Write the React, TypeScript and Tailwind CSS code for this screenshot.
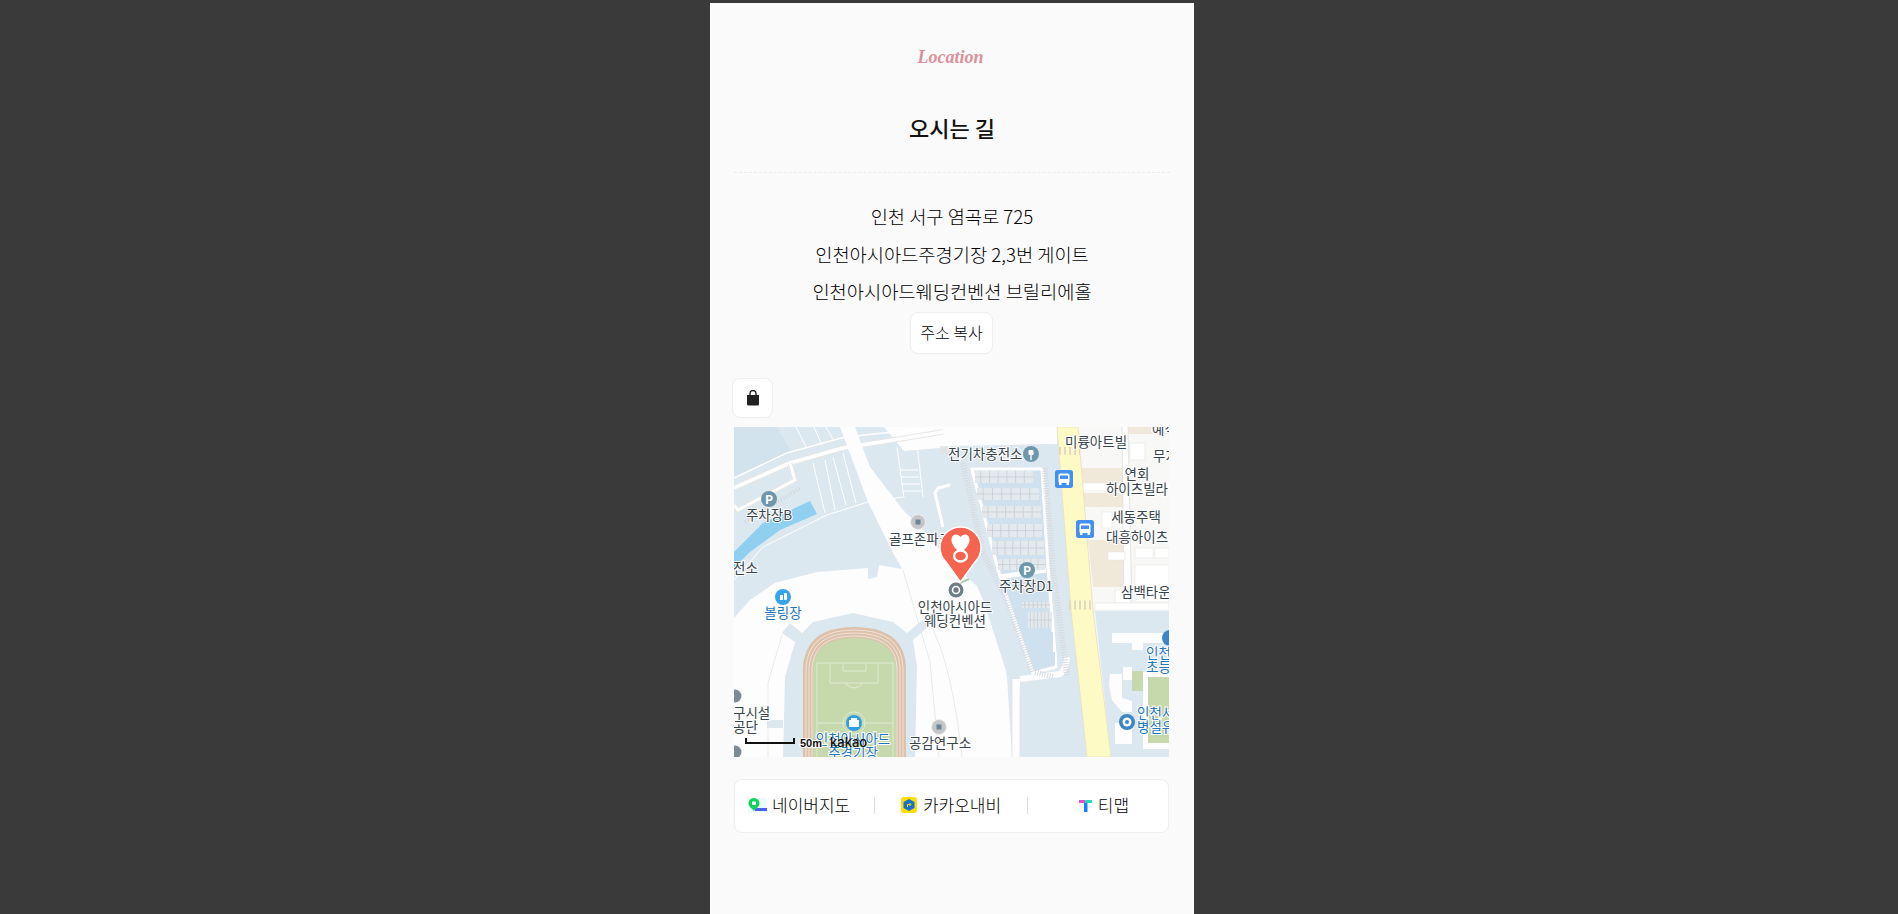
import React from 'react';

const kr = "font-['Noto_Sans_CJK_KR','Noto_Sans',sans-serif]";

type Label = { x: number; y: number; t: string; anchor?: 'start' | 'middle'; blue?: boolean };

const labels: Label[] = [
  { x: 35, y: 93, t: '주차장B', anchor: 'middle' },
  { x: -1, y: 146, t: '전소' },
  { x: 155, y: 117, t: '골프존파크' },
  { x: 214, y: 32, t: '전기차충전소' },
  { x: 331, y: 20, t: '미륭아트빌' },
  { x: 418, y: 7, t: '예식장' },
  { x: 419, y: 34, t: '무지개' },
  { x: 403, y: 52, t: '연회', anchor: 'middle' },
  { x: 403, y: 67, t: '하이츠빌라', anchor: 'middle' },
  { x: 402, y: 95, t: '세동주택', anchor: 'middle' },
  { x: 372, y: 115, t: '대흥하이츠빌' },
  { x: 387, y: 170, t: '삼백타운' },
  { x: 292, y: 164, t: '주차장D1', anchor: 'middle' },
  { x: 221, y: 185, t: '인천아시아드', anchor: 'middle' },
  { x: 221, y: 199, t: '웨딩컨벤션', anchor: 'middle' },
  { x: 49, y: 191, t: '볼링장', anchor: 'middle', blue: true },
  { x: -1, y: 291, t: '구시설' },
  { x: -1, y: 305, t: '공단' },
  { x: 175, y: 321, t: '공감연구소' },
  { x: 119, y: 317, t: '인천아시아드', anchor: 'middle', blue: true },
  { x: 119, y: 331, t: '주경기장', anchor: 'middle', blue: true },
  { x: 412, y: 231, t: '인천시', blue: true },
  { x: 412, y: 245, t: '초등학교', blue: true },
  { x: 403, y: 291, t: '인천서', blue: true },
  { x: 403, y: 305, t: '병설유치원', blue: true },
];

// parking rows: [x, y, width, height, hasBays]
const rows = [
  [241, 44, 58, 12, 1], [243, 61, 62, 12, 1], [248, 79, 59, 12, 1], [253, 97, 55, 13, 1], [258, 114, 52, 14, 1], [264, 132, 47, 11, 1],
  [288, 175, 28, 6, 1], [294, 185, 24, 16, 1], [296, 205, 23, 15, 0], [303, 225, 18, 13, 0],
];

const Bus = ({ x, y }: { x: number; y: number }) => (
  <g transform={`translate(${x} ${y})`}>
    <rect x="-9" y="-9" width="18" height="18" rx="2.5" fill="#4590ee" />
    <rect x="-5.5" y="-5.5" width="11" height="9.5" rx="1.5" fill="#fff" />
    <rect x="-4" y="-3.5" width="8" height="3.5" fill="#4590ee" />
    <rect x="-5" y="4" width="2.5" height="2" fill="#fff" />
    <rect x="2.5" y="4" width="2.5" height="2" fill="#fff" />
  </g>
);

const MapDrawing = () => (
  <svg viewBox="0 0 435 330" className="block w-full h-full">
    <rect width="435" height="330" fill="#dce8f0" />
    {/* north west corner */}
    <path d="M0 0H43L58 26L0 50Z" fill="#d2e3ee" />
    {/* top band and upper roads */}
    <path d="M150 0H323V17L216 20L170 24Z" fill="#fdfdfe" />
    <path d="M206 20H214M206 23H214M206 26H214" stroke="#e3dfda" strokeWidth="1.4" />
    <path d="M0 61L56 36L109 21L209 5" stroke="#e8e6e3" strokeWidth="5.5" fill="none" />
    <path d="M0 61L56 36L109 21L209 5" stroke="#fff" strokeWidth="3.5" fill="none" />
    <path d="M0 51L53 26L111 10L209 0" stroke="#fff" strokeWidth="1.5" fill="none" />
    <path d="M56 36L61 53L4 83L0 78" stroke="#e8e6e3" strokeWidth="4.5" fill="none" />
    <path d="M56 36L61 53L4 83L0 78" stroke="#fff" strokeWidth="2.8" fill="none" />
    <path d="M62 0L72 20M80 0L88 18M92 0L100 14" stroke="#fff" strokeWidth="1" fill="none" />
    <path d="M79 36L91 86M91 33L101 83M99 30L112 78M109 26L122 76" stroke="#fff" strokeWidth="1" fill="none" />
    <path d="M163 20L170 71M183 18L189 70M166 43H184M167 50H185M168 57H186M168 64H187" stroke="#fff" strokeWidth="1" fill="none" />
    <path d="M0 153L29 120L93 88L134 75L169 70" stroke="#fff" strokeWidth="1" fill="none" />
    {/* canal */}
    <path d="M0 125L29 96L76 74L83 87L46 103L16 125L0 141Z" fill="#8fcff0" />
    <path d="M11 95L66 61" stroke="#d0d6db" strokeWidth="4" strokeDasharray="1 2" fill="none" />
    {/* plaza around the stadium */}
    <path d="M0 191L16 173L41 156L83 145L134 141L134 152L143 150L145 138L168 142L206 153L240 170L259 173L273 250L278 330H0Z" fill="#fdfdfe" />
    {/* diagonal road */}
    <path d="M106 0H121L136 40L169 83L196 110L216 136L262 175L245 190L205 170L169 143L159 126L134 75Z" fill="#fdfdfe" />
    <path d="M169 143L196 235L205 330" stroke="#e1e4e7" strokeWidth="0.8" fill="none" />
    <path d="M48 208L34 256V330" stroke="#e1e4e7" strokeWidth="0.8" fill="none" />
    <path d="M199 203Q218 240 228 330" stroke="#e1e4e7" strokeWidth="0.8" fill="none" />
    {/* stadium */}
    <path d="M49 330L51 250L61 215L48 206L56 196L68 206L79 195L119 186L159 195L173 206L191 191L196 198L179 213L183 240L181 330Z" fill="#dce8f0" />
    <path d="M33 293H49V301H33Z" fill="#dce8f0" />
    <path d="M69 330V240Q72 200 120 200Q170 200 172 240V330Z" fill="#dcc1ab" />
    <path d="M72 330V240Q75 203 120 203Q167 203 169 240V330" stroke="#f6ece3" strokeWidth="0.8" fill="none" />
    <path d="M75 330V240Q78 206 120 206Q164 206 166 240V330" stroke="#f6ece3" strokeWidth="0.8" fill="none" />
    <path d="M78 330V240Q81 209 120 209Q161 209 163 240V330" stroke="#f6ece3" strokeWidth="0.8" fill="none" />
    <path d="M79 330V240Q82 211 120 211Q160 211 162 240V330Z" fill="#c6d9ad" />
    <g stroke="#e3edd4" strokeWidth="0.9" fill="none">
      <path d="M83 330V236H159V330" />
      <path d="M96 236V256H144V236" />
      <path d="M109 236V244H132V236" />
      <path d="M111 256Q120 266 129 256" />
      <path d="M83 296H159" />
      <circle cx="120" cy="296" r="11" />
    </g>
    {/* parking lot */}
    <path d="M216 19L316 17L340 200L352 330H286L278 263L250 175L216 100Z" fill="#dce8f0" />
    <path d="M238 42H308L322 240L299 246L264 150Z" fill="#cfe1ee" />
    <path d="M238 42H308L314 140L322 240L299 246L266 150Z" stroke="#fff" strokeWidth="3.2" fill="none" strokeLinejoin="round" />
    <path d="M216 58L204 61L201 66L209 100" stroke="#fff" strokeWidth="3" fill="none" />
    <path d="M286 252L326 247Q332 243 333 230" stroke="#fdfdfe" strokeWidth="6" fill="none" />
    <path d="M266 150L312 143" stroke="#fff" strokeWidth="5" fill="none" />
    {rows.map(([x, y, w, h, bays], i) => (
      <g key={i}>
        <rect x={x} y={y} width={w} height={h} fill={bays ? '#e4e9ed' : '#cfe1ee'} />
        {bays === 1 && (
          <path
            d={`M${x} ${y + h / 2}h${w}M${x + w * 0.1} ${y}v${h}M${x + w * 0.25} ${y}v${h}M${x + w * 0.4} ${y}v${h}M${x + w * 0.55} ${y}v${h}M${x + w * 0.7} ${y}v${h}M${x + w * 0.85} ${y}v${h}`}
            stroke="#c2cbd2"
            strokeWidth="0.7"
            fill="none"
          />
        )}
      </g>
    ))}
    <path d="M229 36L249 126L273 173L299 246" stroke="#d6dadf" strokeWidth="6" strokeDasharray="1 1.5" fill="none" />
    <path d="M311 41L319 146L323 173L333 248" stroke="#d6dadf" strokeWidth="6" strokeDasharray="1 1.5" fill="none" />
    <path d="M301 245L319 250" stroke="#d6dadf" strokeWidth="6" strokeDasharray="1 1.5" fill="none" />
    <path d="M282 252V330" stroke="#fdfdfe" strokeWidth="8" fill="none" />
    <path d="M278 250V330M286 262V330" stroke="#dfe3e6" strokeWidth="0.8" fill="none" />
    {/* east block */}
    <path d="M344 0H435V330H377L359 183Z" fill="#f8f8f7" />
    <path d="M394 0H435V7H394Z" fill="#f0e9da" />
    <path d="M346 41H389V56H347Z" fill="#f0e9da" />
    <path d="M349 66H389V80H350Z" fill="#f0e9da" />
    <path d="M354 113H396L398 160H359Z" fill="#f0e9da" />
    <path d="M388 0H394L398 183H390Z" fill="#fdfdfe" />
    <path d="M388 0L390 183M394 0L398 183" stroke="#dedede" strokeWidth="0.8" fill="none" />
    <path d="M347 57H435V63H347Z" fill="#fff" />
    <g fill="#fff" stroke="#e4e4e2" strokeWidth="0.6">
      <rect x="368" y="85" width="10" height="16" />
      <rect x="396" y="16" width="15" height="17" />
      <rect x="417" y="0" width="18" height="6" />
      <rect x="374" y="125" width="17" height="8" />
      <rect x="401" y="121" width="18" height="10" />
      <rect x="421" y="121" width="14" height="10" />
      <rect x="401" y="138" width="34" height="37" />
      <rect x="381" y="163" width="15" height="13" />
      <rect x="361" y="176" width="74" height="7" />
    </g>
    {/* south east school */}
    <path d="M361 184H435V330H377Z" fill="#dce8f0" />
    <g fill="#fdfdfe">
      <path d="M378 206H436V216H378Z" />
      <path d="M398 216H409V223H398V253H389V240H398Z" />
      <path d="M376 247H388V271L398 274V285H388L378 273L375 258Z" />
      <path d="M381 296H398V317H381Z" />
      <path d="M409 245H436V322H409Z" />
    </g>
    <rect x="414" y="250" width="22" height="66" fill="#c6d9ad" />
    <rect x="398" y="244" width="11" height="20" fill="#c6d9ad" />
    {/* yellow road */}
    <path d="M323 0H344L359 183L377 330H353L337 183Z" fill="#fefac6" stroke="#e6dfc3" strokeWidth="0.8" />
    <path d="M325 24H346" stroke="#e0dac0" strokeWidth="8" strokeDasharray="2 3" fill="none" />
    <path d="M335 178H360" stroke="#e0dac0" strokeWidth="9" strokeDasharray="2 3" fill="none" />
    {/* place marks */}
    <g>
      <circle cx="35" cy="72" r="8" fill="#6f97ab" />
      <circle cx="293" cy="143" r="8" fill="#6f97ab" />
      <text x="35" y="76.5" textAnchor="middle" fill="#fff" fontSize="12" fontWeight="700" className={kr}>P</text>
      <text x="293" y="147.5" textAnchor="middle" fill="#fff" fontSize="12" fontWeight="700" className={kr}>P</text>
      <circle cx="297" cy="27" r="8" fill="#6f97ab" />
      <rect x="294.5" y="23" width="5" height="5" rx="1" fill="#fff" />
      <rect x="296.3" y="28" width="1.4" height="5" fill="#fff" />
      {[[184, 95], [205, 300]].map(([x, y]) => (
        <g key={x}>
          <circle cx={x} cy={y} r="7.5" fill="#c4c6c8" stroke="#eee" strokeWidth="1" />
          <rect x={x - 2.5} y={y - 2.5} width="5" height="5" fill="#6c8494" />
        </g>
      ))}
      <circle cx="1" cy="269" r="6.5" fill="#7d8c92" />
      <circle cx="1" cy="325" r="6.5" fill="#7d8c92" />
      <circle cx="49" cy="170" r="8" fill="#36a4ec" />
      <rect x="46" y="168" width="3" height="5" fill="#fff" />
      <rect x="50" y="166" width="3" height="7" rx="1" fill="#fff" />
      <circle cx="120" cy="296" r="8" fill="#2e9fe6" />
      <path d="M115 293h10v7h-10zM117 291h6v2h-6z" fill="#fff" />
      <circle cx="436" cy="211" r="8" fill="#3d86c6" />
      <circle cx="393" cy="295" r="8" fill="#3d86c6" />
      <circle cx="393" cy="295" r="4.5" fill="#fff" />
      <circle cx="393" cy="295" r="2" fill="#3d86c6" />
      <circle cx="222" cy="163" r="7.5" fill="#6d7f82" />
      <circle cx="222" cy="163" r="3.5" fill="none" stroke="#fff" strokeWidth="1.6" />
      <path d="M226 156L235 152" stroke="#a9cda6" strokeWidth="2" />
    </g>
    <Bus x={330} y={52} />
    <Bus x={351} y={102} />
    {/* map labels */}
    {labels.map((l) => (
      <text
        key={l.t + l.y}
        x={l.x}
        y={l.y}
        textAnchor={l.anchor ?? 'start'}
        fontSize="13.5"
        fill={l.blue ? '#1f78bd' : '#37444c'}
        stroke="#fff"
        strokeWidth="2"
        paintOrder="stroke"
        className={kr}
      >
        {l.t}
      </text>
    ))}
    {/* marker */}
    <path d="M226.5 155L212 135A20.5 20.5 0 1 1 241 135Z" fill="#f4644f" stroke="#fff" strokeWidth="1.4" strokeLinejoin="round" />
    <path d="M226.5 126C220 121 217 116 217.5 112C218 106.5 224 106 226.5 110C229 106 235 106.5 235.5 112C236 116 233 121 226.5 126Z" fill="#fff" />
    <ellipse cx="226.5" cy="129" rx="6.5" ry="5.5" fill="#f4644f" stroke="#fff" strokeWidth="2.4" />
    {/* scale and logo */}
    <path d="M12 311V316H60V311" stroke="#111" strokeWidth="2" fill="none" />
    <text x="66" y="320" fontSize="11" fontWeight="700" fill="#111" stroke="#fff" strokeWidth="2" paintOrder="stroke" className="font-['Liberation_Sans',sans-serif]">50m</text>
    <text x="96" y="320" fontSize="13" fontWeight="500" fill="#111" className="font-['Inter',sans-serif]">kakao</text>
  </svg>
);

const NaverIcon = () => (
  <svg viewBox="0 0 19 15" className="h-[15px] w-[19px]">
    <rect width="19" height="15" fill="#eefbfa" />
    <rect x="7" y="10" width="12" height="3" fill="#4a5ff0" />
    <path d="M6 0A5.5 5.5 0 0 1 11.5 5.5C11.5 8.5 8 10.5 6 13C4 10.5 0.5 8.5 0.5 5.5A5.5 5.5 0 0 1 6 0Z" fill="#0fd35b" />
    <rect x="4" y="3.5" width="4" height="3.5" rx="1" fill="#fff" />
  </svg>
);

const KakaoNaviIcon = () => (
  <svg viewBox="0 0 16 16" className="h-4 w-4">
    <rect width="16" height="16" rx="3" fill="#fadf00" />
    <path d="M8 2L13.5 5V11L8 14L2.5 11V5Z" fill="#1b6fd0" strokeLinejoin="round" />
    <path d="M6.5 10V7.5H9.5M8.5 6L10 7.5L8.5 9" stroke="#fadf00" strokeWidth="1" fill="none" />
  </svg>
);

const TmapIcon = () => (
  <svg viewBox="0 0 13 13" className="h-[13px] w-[13px]">
    <path d="M0 1H6V4H0Z" fill="#e84bd0" />
    <path d="M6 1H13V4H6Z" fill="#22dcc0" />
    <path d="M5 4H8.5V13H5Z" fill="#1481fb" />
  </svg>
);

export default function App() {
  return (
    <div className={`flex h-[914px] justify-center overflow-hidden bg-[#3a3a3a] pl-[6px] pt-[3px] ${kr}`}>
      <div className="h-full w-[484px] bg-[#fafafa] px-6 text-center">
        <p className="pr-[3px] pt-[42px] text-[18px] font-bold italic leading-[24px] text-[#d9919a] font-['Liberation_Serif',serif]">Location</p>
        <h2 className="mt-[42px] text-[22px] font-medium leading-[32px] text-[#111]">오시는 길</h2>
        <div className="mt-[29px] border-t border-dashed border-[#ececec]" />
        <div className="mt-[24px] text-[18.7px] font-light leading-[37.5px] text-black">
          <p>인천 서구 염곡로 725</p>
          <p>인천아시아드주경기장 2,3번 게이트</p>
          <p>인천아시아드웨딩컨벤션 브릴리에홀</p>
        </div>
        <div className="mt-[2px] flex justify-center pr-[1px]">
          <button className="h-[42px] w-[83px] rounded-lg border border-[#eeeeee] bg-white pb-[1px] text-[16px] font-light text-black">주소 복사</button>
        </div>
        <div className="mt-[24.5px] -ml-0.5 flex">
          <button className="flex h-[40px] w-[41px] items-center justify-center rounded-lg border border-[#eeeeee] bg-white">
            <svg viewBox="0 0 14 16" className="h-4 w-[14px]">
              <path d="M4 5V3.5A3 3 0 0 1 10 3.5V5" stroke="#222" strokeWidth="1.4" fill="none" />
              <path d="M1 5H13V14A1.5 1.5 0 0 1 11.5 15.5H2.5A1.5 1.5 0 0 1 1 14Z" fill="#222" />
            </svg>
          </button>
        </div>
        <div className="mt-[9px] h-[330px] w-[435px] overflow-hidden bg-[#dce8f0]">
          <MapDrawing />
        </div>
        <div className="mt-[22px] flex h-[54px] w-[435px] items-center rounded-lg border border-[#eeeeee] bg-white pb-[2px] text-[17px] font-light text-black">
          <a className="flex w-[139px] items-center gap-[5px] pl-[13px]"><NaverIcon />네이버지도</a>
          <a className="flex h-[17px] w-[154px] items-center justify-center gap-[6px] border-x border-[#dddddd]"><KakaoNaviIcon />카카오내비</a>
          <a className="flex flex-1 items-center justify-center gap-[6px] pl-[12px]"><TmapIcon />티맵</a>
        </div>
      </div>
    </div>
  );
}
